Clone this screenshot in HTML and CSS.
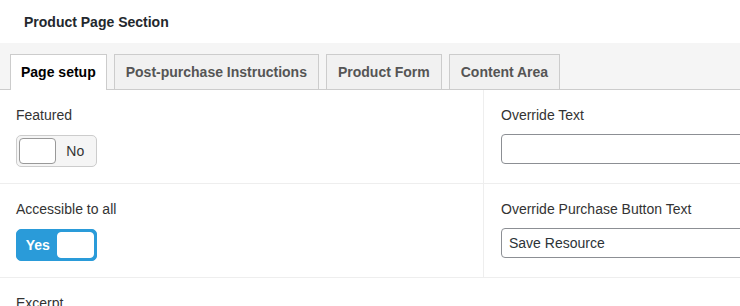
FILE: index.html
```html
<!DOCTYPE html>
<html lang="en">
<head>
  <meta charset="UTF-8" />
  <meta name="viewport" content="width=device-width, initial-scale=1.0"/>
  <title>Product Page Section</title>
  <link rel="stylesheet" href="styles.css">
</head>
<body>
<div class="postbox">
  <h2 class="postbox-title">Product Page Section</h2>

  <div class="tab-wrap">
    <ul class="tab-group">
      <li class="active"><a href="#">Page setup</a></li>
      <li><a href="#">Post-purchase Instructions</a></li>
      <li><a href="#">Product Form</a></li>
      <li><a href="#">Content Area</a></li>
    </ul>
  </div>

  <div class="fields">
    <div class="field">
      <label class="field-label">Featured</label>
      <div class="switch">
        <span class="switch-on">Yes</span>
        <span class="switch-off">No</span>
        <div class="switch-slider"></div>
      </div>
    </div>
    <div class="field">
      <label class="field-label" for="override_text">Override Text</label>
      <input type="text" id="override_text" class="text-input" />
    </div>

    <div class="field">
      <label class="field-label">Accessible to all</label>
      <div class="switch is-on">
        <span class="switch-on">Yes</span>
        <span class="switch-off">No</span>
        <div class="switch-slider"></div>
      </div>
    </div>
    <div class="field">
      <label class="field-label" for="override_button">Override Purchase Button Text</label>
      <input type="text" id="override_button" class="text-input" value="Save Resource" />
    </div>

    <div class="field field-full">
      <label class="field-label">Excerpt</label>
    </div>
  </div>
</div>
</body>
</html>
```

FILE: styles.css
```css
html, body {
  overflow: hidden;
}

body {
  font-family: 'Liberation Sans', Arial, sans-serif;
  margin: 0;
  padding: 0;
  background-color: #fff;
  color: #333;
}

.postbox {
  width: 970px;
  background-color: #fff;
}

.postbox-title {
  margin: 0;
  padding: 2px 24px 0;
  height: 41px;
  line-height: 41px;
  font-size: 14px;
  font-weight: bold;
  color: #23282d;
}

.tab-wrap {
  background-color: #f5f5f5;
  padding: 11px 10px 0;
  border-bottom: 1px solid #ccc;
}

.tab-group {
  list-style: none;
  margin: 0;
  padding: 0;
  display: flex;
  gap: 7px;
}

.tab-group li {
  margin-bottom: -1px;
}

.tab-group a {
  display: block;
  height: 34px;
  line-height: 34px;
  padding: 0 11px;
  font-size: 14px;
  font-weight: bold;
  color: #555;
  text-decoration: none;
  background-color: #f1f1f1;
  border: 1px solid #ccc;
  border-bottom: none;
}

.tab-group li.active a {
  background-color: #fff;
  color: #000;
  height: 35px;
  padding: 0 10px;
}

.fields {
  display: grid;
  grid-template-columns: 484px 1fr;
}

.field {
  padding: 15px 16px 16px;
  border-bottom: 1px solid #eee;
}

.field:nth-child(odd) {
  border-right: 1px solid #eee;
}

.field:nth-child(even) {
  padding-left: 17px;
}

.field-full {
  grid-column: 1 / -1;
  border-right: none;
}

.field-label {
  display: block;
  font-size: 14px;
  line-height: 20px;
  margin-bottom: 10px;
  color: #333;
}

.switch {
  position: relative;
  display: flex;
  width: 81px;
  height: 32px;
  box-sizing: border-box;
  border: 1px solid #ccc;
  border-radius: 5px;
  background-color: #f5f5f5;
  font-size: 14px;
  line-height: 30px;
}

.switch span {
  flex: 1;
  text-align: center;
}

.switch-on {
  visibility: hidden;
  color: #fff;
  padding-left: 2px;
}

.switch-off {
  color: #333;
  padding-right: 2px;
}

.switch-slider {
  position: absolute;
  top: 2px;
  left: 2px;
  width: 37px;
  height: 26px;
  box-sizing: border-box;
  background-color: #fff;
  border: 1px solid #999;
  border-radius: 4px;
}

.switch.is-on {
  background-color: #2a9bd9;
  border-color: #2a9bd9;
}

.switch.is-on .switch-on {
  visibility: visible;
  font-weight: bold;
}

.switch.is-on .switch-off {
  visibility: hidden;
}

.switch.is-on .switch-slider {
  left: auto;
  right: 2px;
  border-color: #fff;
}

.text-input {
  display: block;
  width: 100%;
  height: 30px;
  box-sizing: border-box;
  margin-top: -1px;
  padding: 0 7px;
  border: 1px solid #8c8f94;
  border-radius: 4px;
  font-family: inherit;
  font-size: 14px;
  color: #2c3338;
  background-color: #fff;
}
```
